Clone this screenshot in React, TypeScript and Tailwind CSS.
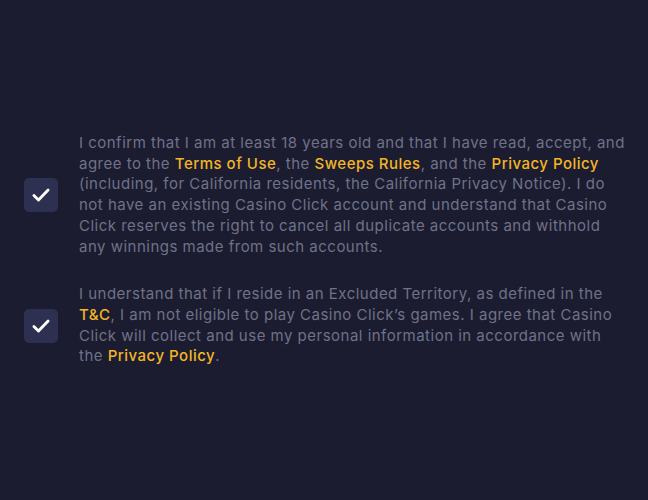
import React from 'react';

const CheckIcon = () => (
  <svg className="h-5 w-5 text-white" viewBox="0 0 24 24" fill="none" stroke="currentColor">
    <path strokeLinecap="round" strokeLinejoin="round" strokeWidth={3.4} d="M3.5 12.5l5.5 5.5L20.5 6" />
  </svg>
);

const Checkbox = () => (
  <div className="flex h-[34px] w-[34px] shrink-0 items-center justify-center rounded-[5px] bg-[#2d3050]">
    <CheckIcon />
  </div>
);

const Link = ({ children }: { children: React.ReactNode }) => (
  <a href="#" className="font-medium text-[#f4b527]">
    {children}
  </a>
);

const App = () => {
  return (
    <div
      className="flex min-h-[500px] flex-col justify-center gap-[27px] bg-[#1b1c30] pl-6 pr-4"
      style={{ fontFamily: 'Inter, "Open Sans", sans-serif' }}
    >
      <label className="flex items-center gap-[21px]">
        <Checkbox />
        <p className="w-[548px] text-[15px] leading-[20.7px] tracking-[0.49px] text-[#6f7288]">
          I confirm that I am at least 18 years old and that I have read, accept, and agree to the{' '}
          <Link>Terms of Use</Link>, the <Link>Sweeps Rules</Link>, and the <Link>Privacy Policy</Link>{' '}
          (including, for California residents, the California Privacy Notice). I do not have an
          existing Casino Click account and understand that Casino Click reserves the right to cancel
          all duplicate accounts and withhold any winnings made from such accounts.
        </p>
      </label>
      <label className="flex items-center gap-[21px]">
        <Checkbox />
        <p className="w-[548px] text-[15px] leading-[20.7px] tracking-[0.49px] text-[#6f7288]">
          I understand that if I reside in an Excluded Territory, as defined in the <Link>T&amp;C</Link>,
          I am not eligible to play Casino Click’s games. I agree that Casino Click will collect and use
          my personal information in accordance with the <Link>Privacy Policy</Link>.
        </p>
      </label>
    </div>
  );
};

export default App;
